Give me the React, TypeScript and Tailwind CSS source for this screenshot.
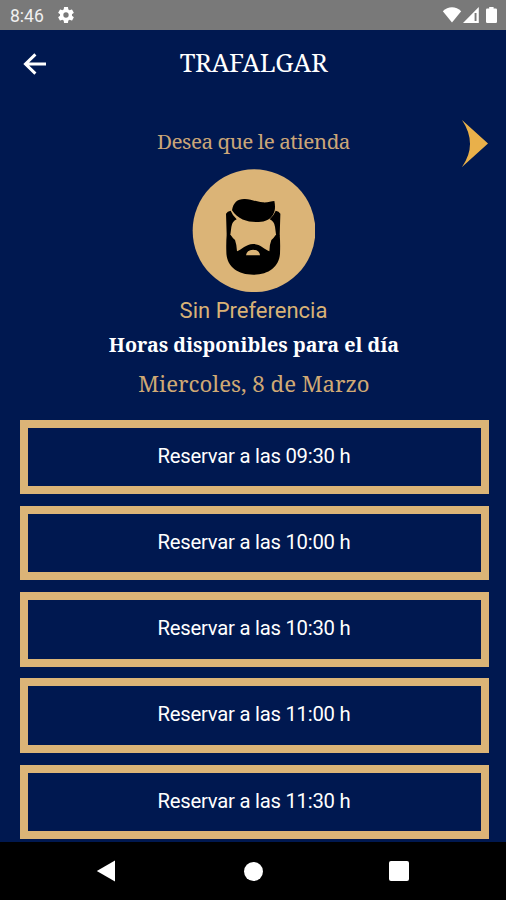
const HOURS = ["09:30", "10:00", "10:30", "11:00", "11:30"];

const SERIF = "font-['Noto_Serif','DejaVu_Serif_Condensed','DejaVu_Serif',serif]";

export default function App() {
  return (
    <div className="flex h-[900px] w-[506px] flex-col overflow-hidden bg-[#001850] font-['Roboto',sans-serif]">
      <StatusBar />
      <header className="grid h-[68px] flex-none grid-cols-[70px_1fr_69px] items-center">
        <button aria-label="Volver" className="flex h-full items-center pl-[23px]">
          <BackIcon />
        </button>
        <h1 className={`pb-[5px] text-center text-[25.5px] leading-8 tracking-[-0.3px] whitespace-nowrap text-white ${SERIF}`}>
          TRAFALGAR
        </h1>
      </header>

      <main className="flex min-h-0 flex-1 flex-col overflow-hidden">
        <BarberPicker />
        <h2 className={`mt-[4px] ml-[2px] h-[30px] text-center text-[19.7px] leading-[30px] font-bold whitespace-nowrap text-white ${SERIF}`}>
          Horas disponibles para el día
        </h2>
        <p className={`mt-[8px] ml-[2px] h-[32px] text-center text-[22.2px] leading-[32px] whitespace-nowrap text-[#d0a974] ${SERIF}`}>
          Miercoles, 8 de Marzo
        </p>
        <ul className="mt-[19.4px] mr-[17px] ml-[20px] flex flex-col gap-[11.8px]">
          {HOURS.map((hour) => (
            <li key={hour}>
              <button className="flex h-[74.4px] w-full items-center justify-center border-8 border-[#dbb477] pr-[1px] pb-[2px] text-[20.3px] tracking-[-0.25px] text-white">
                Reservar a las {hour} h
              </button>
            </li>
          ))}
        </ul>
      </main>

      <NavigationBar />
    </div>
  );
}

function StatusBar() {
  return (
    <div className="flex h-[30px] flex-none items-center bg-[#797979] pr-[8px] pl-[10px] text-white">
      <span className="pt-[3px] text-[17.5px] leading-none text-[#f0f0f0]">8:46</span>
      <svg viewBox="0 0 24 24" className="ml-[12px] h-[20px] w-[20px]" fill="currentColor">
        <path d="M19.14 12.94c.04-.3.06-.61.06-.94 0-.32-.02-.64-.07-.94l2.03-1.58c.18-.14.23-.41.12-.61l-1.92-3.32c-.12-.22-.37-.29-.59-.22l-2.39.96c-.5-.38-1.03-.7-1.62-.94l-.36-2.54c-.04-.24-.24-.41-.48-.41h-3.84c-.24 0-.43.17-.47.41l-.36 2.54c-.59.24-1.13.57-1.62.94l-2.39-.96c-.22-.08-.47 0-.59.22L2.74 8.87c-.12.21-.08.47.12.61l2.03 1.58c-.05.3-.09.63-.09.94s.02.64.07.94l-2.03 1.58c-.18.14-.23.41-.12.61l1.92 3.32c.12.22.37.29.59.22l2.39-.96c.5.38 1.03.7 1.62.94l.36 2.54c.05.24.24.41.48.41h3.84c.24 0 .44-.17.47-.41l.36-2.54c.59-.24 1.13-.56 1.62-.94l2.39.96c.22.08.47 0 .59-.22l1.92-3.32c.12-.22.07-.47-.12-.61l-2.01-1.58zM12 15.2A3.2 3.2 0 1 1 12 8.8a3.2 3.2 0 0 1 0 6.4z" />
      </svg>
      <svg viewBox="0 0 56 20" className="ml-auto h-[20px] w-[56px]" fill="currentColor">
        {/* wifi */}
        <path d="M.8 6.2C6 1 14 1 19.2 6.2L10 17.6z" />
        {/* mobile signal */}
        <path fillRule="evenodd" d="M21 18 36.8 2v16zM32.6 8v8h1.9V8z" />
        {/* battery */}
        <path d="M47.2 2h4.4v1.6h2.2a1.2 1.2 0 0 1 1.2 1.2v12a1.2 1.2 0 0 1-1.2 1.2h-8.6a1.2 1.2 0 0 1-1.2-1.2v-12a1.2 1.2 0 0 1 1.2-1.2h2z" />
      </svg>
    </div>
  );
}

function BackIcon() {
  return (
    <svg viewBox="0 0 24 22" className="h-[22px] w-[24px]" fill="none" stroke="#fff" strokeWidth="3">
      <path d="M12.4 1.4 2.5 11l9.9 9.6M2.5 11H23" />
    </svg>
  );
}

function BarberPicker() {
  return (
    <section className="flex flex-none flex-col">
      <div className="mt-[20px] grid h-[51px] grid-cols-[46px_1fr_45px] items-center">
        <span />
        <p className={`pb-[6px] text-center text-[20.7px] leading-8 tracking-[-0.5px] whitespace-nowrap text-[#cba678] ${SERIF}`}>
          Desea que le atienda
        </p>
        <button aria-label="Siguiente" className="flex h-full items-center">
          <svg viewBox="0 0 28 50" className="h-[50px] w-[28px]">
            <path d="M1 1 27 24.5 1 48Q17 25 1 1z" fill="#e9b04a" />
          </svg>
        </button>
      </div>
      <BarberAvatar />
      <p className="mt-[4px] ml-[1px] h-[30px] text-center text-[22px] leading-[30px] text-[#d9b276]">
        Sin Preferencia
      </p>
    </section>
  );
}

function BarberAvatar() {
  return (
    <svg viewBox="22 11 370 370" className="ml-[192px] h-[123.4px] w-[123.4px]">
      <circle cx="208" cy="196" r="184" fill="#dbb477" />
      {/* hair */}
      <path d="M142 135C146 112 158 101 178 101C198 100 214 110 234 111C248 112 260 108 269 107C272 122 272 137 265 148C257 161 242 169 222 170C193 172 160 164 142 135Z" />
      {/* sideburns */}
      <path d="M124 145Q128 137 138 136Q144 151 156 162Q142 168 140 185L137 208 131 217 126 208Z" />
      <path d="M287 145Q283 137 273 136Q267 151 255 162Q269 168 271 185L274 208 281 217 285 208Z" />
      {/* beard */}
      <path
        fillRule="evenodd"
        d="M126 208 138 209Q143 217 151 224Q156 238 157 258C171 253 184 236 205 236C226 236 240 253 254 258Q254 238 260 224Q268 217 273 209L285 208Q287 232 286 260C286 302 254 328 206 328C158 328 125 302 125 260Q124 232 126 208ZM184 270H226Q225 254 205 253Q186 254 184 270Z"
      />
    </svg>
  );
}

function NavigationBar() {
  return (
    <nav className="grid h-[58px] flex-none grid-cols-[180px_147px_179px] items-center bg-black">
      <button aria-label="Atrás" className="pl-[96px]">
        <svg viewBox="0 0 20 22" className="h-[22px] w-[20px]" fill="#fff">
          <path d="M.8 11 19 .5v21z" />
        </svg>
      </button>
      <button aria-label="Inicio" className="mx-auto h-[19px] w-[19px] rounded-full bg-white" />
      <button aria-label="Recientes" className="ml-[62px] h-[20px] w-[20px] rounded-[2px] bg-white" />
    </nav>
  );
}
